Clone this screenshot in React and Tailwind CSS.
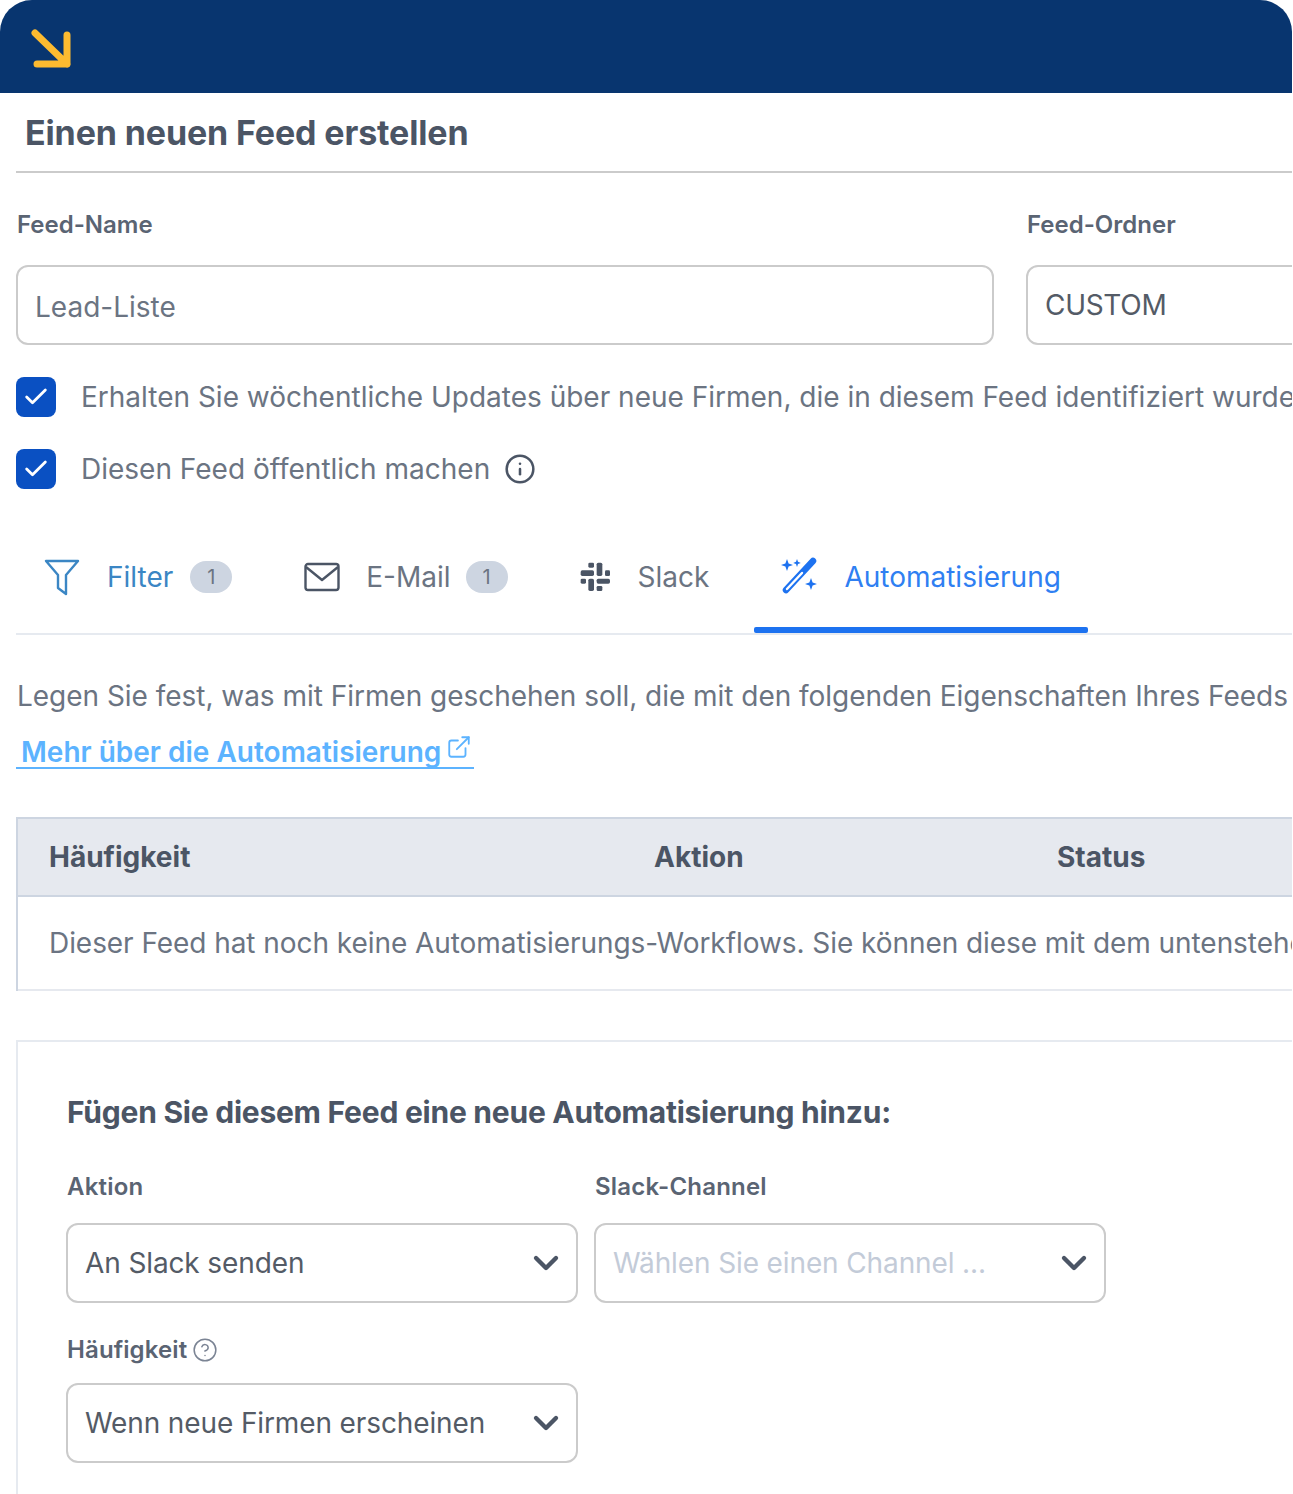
import React from 'react';
import { Check, ChevronDown, Info, ExternalLink, CircleHelp } from 'lucide-react';

const font = { fontFamily: 'Inter, "Noto Sans", sans-serif' };

const FunnelIcon = () => (
  <svg viewBox="0 0 36 38" className="w-9 h-[38px] shrink-0" fill="none" stroke="#3b86c4" strokeWidth="2.4" strokeLinejoin="round">
    <path d="M2 3h32L22 17v19l-8-6V17z" />
  </svg>
);

const MailIcon = () => (
  <svg viewBox="0 0 36 30" className="w-9 h-[30px] shrink-0" fill="none" stroke="#4b5565" strokeWidth="2.4" strokeLinejoin="round">
    <rect x="1.5" y="2" width="33" height="26" rx="2.5" />
    <path d="M2 5l16 13L34 5" />
  </svg>
);

const SlackIcon = () => (
  <svg viewBox="30 33 90 90" className="w-[30px] h-[30px] shrink-0 fill-[#4b5565]">
    <rect x="55" y="35" width="17" height="15" rx="4" />
    <rect x="80" y="35" width="17" height="40" rx="5" />
    <rect x="32" y="58" width="40" height="17" rx="5" />
    <rect x="105" y="58" width="15" height="17" rx="4" />
    <rect x="32" y="83" width="16" height="15" rx="4" />
    <rect x="80" y="83" width="40" height="15" rx="5" />
    <rect x="55" y="83" width="17" height="37" rx="5" />
    <rect x="80" y="105" width="17" height="15" rx="4" />
  </svg>
);

const WandIcon = () => (
  <svg viewBox="0 0 40 40" className="w-10 h-10 shrink-0" fill="#1d72f0">
    <path d="M33 4L6 33" stroke="#1d72f0" strokeWidth="6.5" strokeLinecap="round" />
    <path d="M22 16L7 32" stroke="#ffffff" strokeWidth="2.4" strokeLinecap="round" />
    <path d="M7 2l1.6 4.4L13 8l-4.4 1.6L7 14l-1.6-4.4L1 8l4.4-1.6z" />
    <path d="M17 2l1 2.8 2.8 1.2-2.8 1L17 10l-1-3-2.8-1 2.8-1.200z" />
    <path d="M31 21l1.600 4.400L37 27l-4.400 1.600L31 33l-1.600-4.400L25 27l4.400-1.600z" />
  </svg>
);

const Tick = ({ label, children }) => (
  <div className="flex items-center h-10 whitespace-nowrap">
    <span className="w-10 h-10 shrink-0 rounded-lg bg-[#0a50c2] flex items-center justify-center">
      <Check className="w-7 h-7 text-white" strokeWidth={2.4} />
    </span>
    <span className="ml-[25px] text-[28px] text-[#6b7482]">{label}</span>
    {children}
  </div>
);

const Dropdown = ({ text, muted }) => (
  <div className="w-[512px] h-20 shrink-0 rounded-xl border-2 border-[#cbcbcb] bg-white flex items-center justify-between pl-[17px] pr-[10px]">
    <span className={`text-[28px] tracking-[-0.12px] ${muted ? 'text-[#c3cbd8]' : 'text-[#545b66]'}`}>{text}</span>
    <ChevronDown className="w-10 h-10 text-[#4b5565]" strokeWidth={2.6} />
  </div>
);

const Badge = ({ gap }) => (
  <span className={`${gap} w-[42px] h-8 rounded-full bg-[#cdd5e1] text-[#6b7482] text-xl flex items-center justify-center`}>1</span>
);

export default function App() {
  return (
    <div className="w-[1292px] h-[1494px] overflow-hidden bg-white" style={font}>
      {/* Top bar */}
      <div className="h-[93px] bg-[#08356f] rounded-t-[32px] pl-[30px] pt-[28px]">
        <svg viewBox="0 0 42 42" className="w-[42px] h-[42px]" fill="none" stroke="#fdbb30" strokeWidth="7" strokeLinecap="round" strokeLinejoin="round">
          <path d="M5 5l32 31M37 7v29H7" />
        </svg>
      </div>

      <div className="pl-4">
        <div className="h-[80px] border-b-2 border-[#cbcbcb] pl-[9px] flex items-center">
          <h1 className="text-[34px] font-bold text-[#4b5565] tracking-[-0.13px]">Einen neuen Feed erstellen</h1>
        </div>

        {/* Name + folder */}
        <div className="flex gap-8 mt-9 whitespace-nowrap">
          <div className="w-[978px] shrink-0">
            <label className="block text-2xl font-semibold text-[#5a6473] pl-px">Feed-Name</label>
            <div className="mt-6 h-20 rounded-xl border-2 border-[#cbcbcb] flex items-center pl-[17px] pt-1 text-[28px] text-[#6b7482]">Lead-Liste</div>
          </div>
          <div className="w-[400px] shrink-0">
            <label className="block text-2xl font-semibold text-[#5a6473] pl-px">Feed-Ordner</label>
            <div className="mt-6 h-20 rounded-xl border-2 border-[#cbcbcb] flex items-center pl-[17px] text-[28px] tracking-[-0.3px] text-[#545b66]">CUSTOM</div>
          </div>
        </div>

        <div className="mt-8 flex flex-col gap-8">
          <Tick label="Erhalten Sie wöchentliche Updates über neue Firmen, die in diesem Feed identifiziert wurden" />
          <Tick label="Diesen Feed öffentlich machen">
            <Info className="ml-[14px] w-8 h-8 text-[#4b5565]" strokeWidth={1.9} />
          </Tick>
        </div>

        {/* Tabs */}
        <div className="mt-9 h-[110px] border-b-2 border-[#e6eaf0] flex whitespace-nowrap text-[28px]">
          <div className="flex items-center pl-7 pb-1">
            <FunnelIcon />
            <span className="ml-[27px] text-[#3b86c4]">Filter</span>
            <Badge gap="ml-[17px]" />
          </div>
          <div className="flex items-center ml-[72px] pb-1">
            <MailIcon />
            <span className="ml-[26px] text-[#6b7482]">E-Mail</span>
            <Badge gap="ml-[15px]" />
          </div>
          <div className="flex items-center ml-[72px] pb-1">
            <SlackIcon />
            <span className="ml-7 text-[#6b7482]">Slack</span>
          </div>
          <div className="relative flex items-center ml-[45px] w-[334px] pl-[26px] pb-1">
            <WandIcon />
            <span className="ml-6 text-[#2f7ff2]">Automatisierung</span>
            <span className="absolute left-0 right-0 bottom-0 h-[6px] rounded-[2px] bg-[#1d72f0]" />
          </div>
        </div>

        <p className="mt-[43px] pl-px text-[28px] tracking-[-0.03px] leading-9 text-[#6b7482] whitespace-nowrap">Legen Sie fest, was mit Firmen geschehen soll, die mit den folgenden Eigenschaften Ihres Feeds übereinstimmen.</p>

        <div className="mt-5 w-[458px] h-[35px] border-b-2 border-[#5cb3ff] pl-[5px] flex items-start whitespace-nowrap">
          <span className="text-[28px] leading-9 font-semibold text-[#5cb3ff]">Mehr über die Automatisierung</span>
          <ExternalLink className="ml-[5px] w-[26px] h-[26px] text-[#5cb3ff]" strokeWidth={1.7} />
        </div>

        {/* Table */}
        <div className="mt-12 border-l-2 border-[#cdd5e1] whitespace-nowrap">
          <div className="h-[80px] bg-[#e6e9ef] border-y-2 border-[#cdd5e1] flex items-center text-[28px] font-bold text-[#4b5565]">
            <span className="ml-[31px] w-[605px]">Häufigkeit</span>
            <span className="w-[403px]">Aktion</span>
            <span>Status</span>
          </div>
          <div className="h-[94px] border-b-2 border-[#e6e9ef] flex items-center pl-[31px] text-[28px] tracking-[-0.06px] text-[#6b7482]">Dieser Feed hat noch keine Automatisierungs-Workflows. Sie können diese mit dem untenstehenden Formular hinzufügen.</div>
        </div>

        {/* Add automation */}
        <div className="mt-[49px] border-l-2 border-t-2 border-[#e6eaf0] pl-12 pt-[50px] h-[460px]">
          <h2 className="pl-px text-[30px] font-bold leading-10 text-[#4b5565] tracking-[-0.24px]">Fügen Sie diesem Feed eine neue Automatisierung hinzu:</h2>
          <div className="flex gap-4 mt-[39px]">
            <div>
              <label className="block pl-px text-2xl leading-8 font-semibold tracking-[0.2px] text-[#5a6473]">Aktion</label>
              <div className="mt-5"><Dropdown text="An Slack senden" /></div>
            </div>
            <div>
              <label className="block pl-px text-2xl leading-8 font-semibold tracking-[0.2px] text-[#5a6473]">Slack-Channel</label>
              <div className="mt-5"><Dropdown text="Wählen Sie einen Channel ..." muted /></div>
            </div>
          </div>
          <label className="mt-[31px] pl-px flex items-center h-8 text-2xl font-semibold tracking-[0.1px] text-[#5a6473]">
            Häufigkeit
            <CircleHelp className="ml-[5px] w-[26px] h-[26px] text-[#7b8494]" strokeWidth={1.4} />
          </label>
          <div className="mt-[17px]"><Dropdown text="Wenn neue Firmen erscheinen" /></div>
        </div>
      </div>
    </div>
  );
}
